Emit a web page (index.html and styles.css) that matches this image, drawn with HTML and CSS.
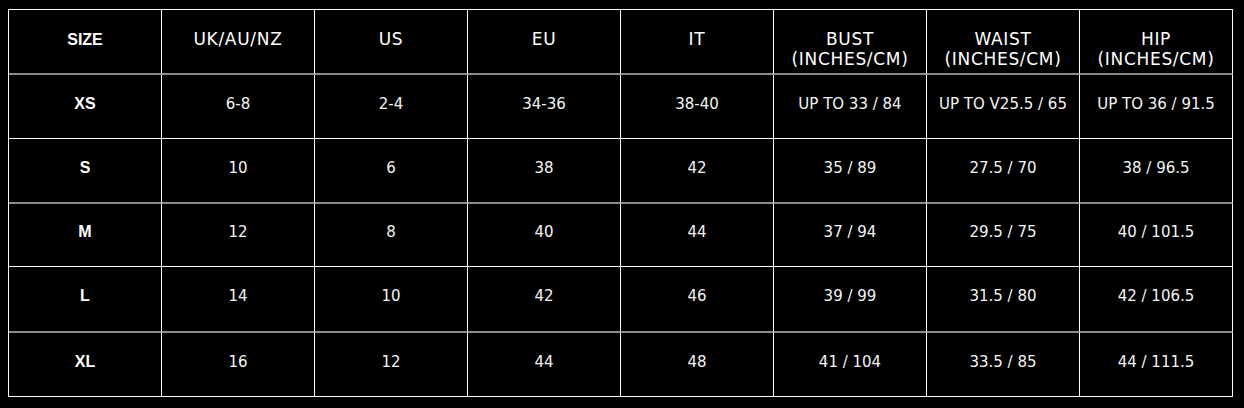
FILE: index.html
```html
<!DOCTYPE html>
<html lang="en">
<head>
<meta charset="utf-8">
<title>Size chart</title>
<link rel="stylesheet" href="styles.css">
</head>
<body>
<div class="chart">
  <div class="row row--head row--gray">
    <div class="cell cell--key">SIZE</div>
    <div class="cell">UK/AU/NZ</div>
    <div class="cell">US</div>
    <div class="cell">EU</div>
    <div class="cell">IT</div>
    <div class="cell">BUST<br>(INCHES/CM)</div>
    <div class="cell">WAIST<br>(INCHES/CM)</div>
    <div class="cell">HIP<br>(INCHES/CM)</div>
  </div>
  <div class="row row--white">
    <div class="cell cell--key">XS</div>
    <div class="cell">6-8</div>
    <div class="cell">2-4</div>
    <div class="cell">34-36</div>
    <div class="cell">38-40</div>
    <div class="cell">UP TO 33 / 84</div>
    <div class="cell">UP TO V25.5 / 65</div>
    <div class="cell">UP TO 36 / 91.5</div>
  </div>
  <div class="row row--gray">
    <div class="cell cell--key">S</div>
    <div class="cell">10</div>
    <div class="cell">6</div>
    <div class="cell">38</div>
    <div class="cell">42</div>
    <div class="cell">35 / 89</div>
    <div class="cell">27.5 / 70</div>
    <div class="cell">38 / 96.5</div>
  </div>
  <div class="row row--white">
    <div class="cell cell--key">M</div>
    <div class="cell">12</div>
    <div class="cell">8</div>
    <div class="cell">40</div>
    <div class="cell">44</div>
    <div class="cell">37 / 94</div>
    <div class="cell">29.5 / 75</div>
    <div class="cell">40 / 101.5</div>
  </div>
  <div class="row row--gray">
    <div class="cell cell--key">L</div>
    <div class="cell">14</div>
    <div class="cell">10</div>
    <div class="cell">42</div>
    <div class="cell">46</div>
    <div class="cell">39 / 99</div>
    <div class="cell">31.5 / 80</div>
    <div class="cell">42 / 106.5</div>
  </div>
  <div class="row row--white">
    <div class="cell cell--key">XL</div>
    <div class="cell">16</div>
    <div class="cell">12</div>
    <div class="cell">44</div>
    <div class="cell">48</div>
    <div class="cell">41 / 104</div>
    <div class="cell">33.5 / 85</div>
    <div class="cell">44 / 111.5</div>
  </div>
</div>
</body>
</html>
```
FILE: styles.css
```css
html, body {
  margin: 0;
  padding: 0;
  background: #000;
}

body {
  color: #fff;
  font-family: "DejaVu Sans", "Liberation Sans", sans-serif;
}

.chart {
  display: grid;
  grid-template-columns: repeat(8, 153px);
  grid-template-rows: 65px 64px 65px 63px 66px 64px;
  width: max-content;
  margin: 9px 0 0 8px;
  border-left: 1px solid #fff;
  border-top: 1px solid #fff;
}

.row {
  display: contents;
}

.cell {
  box-sizing: border-box;
  border-right: 1px solid #fff;
  display: flex;
  align-items: center;
  justify-content: center;
  text-align: center;
  font-size: 15px;
  line-height: 18px;
  padding-bottom: 6px;
  color: #f4f4f4;
}

.row--white .cell {
  border-bottom: 1px solid #fff;
}

.row--gray .cell {
  border-bottom: 2px solid #8a8a8a;
}

.row--head .cell {
  align-items: flex-start;
  padding: 19px 0 0;
  font-size: 17px;
  line-height: 20px;
  letter-spacing: 0.7px;
  color: #fff;
}

.cell--key {
  font-family: "Liberation Sans", "DejaVu Sans", sans-serif;
  font-weight: 700;
  font-size: 16px;
  letter-spacing: 0;
  color: #fff;
}

.row--head .cell--key {
  font-size: 16px;
  letter-spacing: 0;
  padding-top: 20px;
}
```
